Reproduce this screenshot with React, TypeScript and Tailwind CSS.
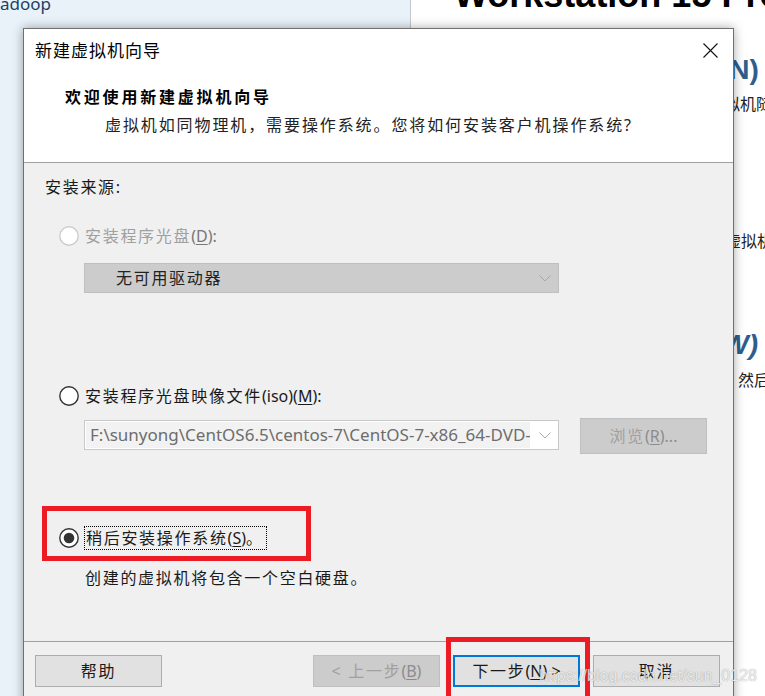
import React from "react";

function Radio({ checked, disabled }: { checked?: boolean; disabled?: boolean }) {
  return (
    <svg width="20" height="20" viewBox="0 0 20 20" className="shrink-0">
      <circle cx="10" cy="10" r="9.2" fill="white" stroke={disabled ? "#cccccc" : "#333333"} strokeWidth="1.4" />
      {checked && <circle cx="10" cy="10" r="5.3" fill="#333333" />}
    </svg>
  );
}

function Chevron() {
  return (
    <svg width="12" height="7" viewBox="0 0 12 7" className="shrink-0">
      <path d="M0.5 0.5 L6 6 L11.5 0.5" fill="none" stroke="#a8a8a8" strokeWidth="1" />
    </svg>
  );
}

export default function App() {
  return (
    <div className="relative w-[765px] h-[696px] overflow-hidden bg-white flex font-['Noto_Sans','Noto_Sans_CJK_SC',sans-serif]">
      {/* left pane of background app */}
      <div className="w-[411px] h-full shrink-0 bg-[#e9f1f9] border-r border-[#c4c8cc]">
        <div className="-mt-[5px] text-[17px] leading-none text-[#1d3f63]">adoop</div>
      </div>

      {/* right pane of background app */}
      <div className="flex-1 h-full overflow-hidden bg-white flex flex-col whitespace-nowrap">
        <div className="-mt-[23px] h-[36px] pl-[43px] text-[36px] leading-[36px] font-bold text-black font-['Liberation_Sans',sans-serif]">
          Workstation 15 Pro
        </div>
        <div className="mt-[43px] h-[28px] pl-[309px] text-[28px] leading-[28px] font-bold text-[#2e5e8e] font-['Liberation_Sans',sans-serif]">
          (N)
        </div>
        <div className="mt-[8px] h-[24px] pl-[297px] text-[16px] leading-[24px] text-[#222]">虚拟机随时</div>
        <div className="mt-[113px] h-[24px] pl-[314px] text-[16px] leading-[24px] text-[#222]">虚拟机</div>
        <div className="mt-[78px] h-[28px] pl-[302px] text-[28px] leading-[28px] font-bold italic text-[#2e5e8e] font-['Liberation_Sans',sans-serif]">
          (W)
        </div>
        <div className="mt-[9px] h-[24px] pl-[327px] text-[16px] leading-[24px] text-[#222]">然后</div>
      </div>

      {/* dialog window */}
      <div className="absolute left-[23px] top-[28px] w-[711px] h-[700px] border border-[#707070] bg-[#f0f0f0] shadow-[0_0_10px_rgba(0,0,0,0.35)] flex flex-col">
        <div className="bg-white border-b border-[#a0a0a0] flex flex-col">
          {/* title bar */}
          <div className="h-[42px] flex items-center justify-between pl-[11px] pr-[15px]">
            <span className="text-[17px] tracking-[1px] text-black leading-none">新建虚拟机向导</span>
            <svg width="15" height="15" viewBox="0 0 15 15">
              <path d="M0.5 0.5 L14.5 14.5 M14.5 0.5 L0.5 14.5" stroke="#111" strokeWidth="1.1" fill="none" />
            </svg>
          </div>
          {/* header */}
          <div className="h-[91px] flex flex-col">
            <div className="mt-[14px] pl-[41px] h-[24px] leading-[24px] text-[16px] font-bold tracking-[2.8px] text-black">
              欢迎使用新建虚拟机向导
            </div>
            <div className="mt-[4px] pl-[81px] h-[24px] leading-[24px] text-[16px] tracking-[1.9px] text-[#222]">
              虚拟机如同物理机，需要操作系统。您将如何安装客户机操作系统?
            </div>
          </div>
        </div>

        {/* body */}
        <div className="h-[478px] shrink-0 flex flex-col text-[16px] tracking-[1.7px] text-[#1a1a1a]">
          <div className="mt-[12px] pl-[21px] h-[24px] leading-[24px]">安装来源:</div>

          <div className="mt-[25px] pl-[35px] h-[24px] flex items-center gap-[6px]">
            <Radio disabled />
            <span className="leading-[24px] text-[#a0a0a0]">
              安装程序光盘<span className="tracking-normal text-[#777]">(<span className="underline underline-offset-2">D</span>):</span>
            </span>
          </div>

          <div className="mt-[15px] ml-[60px] w-[475px] h-[30px] bg-[#cccccc] border border-[#bfbfbf] flex items-center justify-between pl-[31px] pr-[7px]">
            <span className="leading-none text-[#222]">无可用驱动器</span>
            <Chevron />
          </div>

          <div className="mt-[91px] pl-[35px] h-[24px] flex items-center gap-[6px]">
            <Radio />
            <span className="leading-[24px]">
              安装程序光盘映像文件<span className="tracking-normal">(iso)(<span className="underline underline-offset-2">M</span>):</span>
            </span>
          </div>

          <div className="mt-[10px] ml-[60px] h-[36px] flex items-start">
            <div className="mt-[2px] w-[475px] h-[30px] bg-white border border-[#c8c8c8] flex items-center pl-[1px] pr-[7px]">
              <div className="w-[444px] h-[26px] bg-[#f2f2f2] overflow-hidden whitespace-nowrap pl-[4px] leading-[26px] text-[17px] tracking-normal text-[#6d6d6d]">
                F:\sunyong\CentOS6.5\centos-7\CentOS-7-x86_64-DVD-1708.iso
              </div>
              <div className="ml-auto">
                <Chevron />
              </div>
            </div>
            <div className="ml-[21px] w-[127px] h-[36px] bg-[#cccccc] border border-[#bfbfbf] flex items-center justify-center text-[#a0a0a0]">
              浏览<span className="tracking-normal text-[#8c8c8c]">(<span className="underline underline-offset-2">R</span>)...</span>
            </div>
          </div>

          <div className="mt-[72px] pl-[35px] h-[24px] flex items-center gap-[5px]">
            <Radio checked />
            <span className="h-[24px] leading-[22px] border border-dotted border-black pl-[1px] pr-[2px]">
              稍后安装操作系统<span className="tracking-normal">(<span className="underline underline-offset-2">S</span>)</span>。
            </span>
          </div>

          <div className="mt-[16px] pl-[61px] h-[24px] leading-[24px]">创建的虚拟机将包含一个空白硬盘。</div>
        </div>

        {/* footer */}
        <div className="border-t border-[#a0a0a0] pt-[13px] pl-[11px] flex text-[16px] tracking-[1.7px]">
          <div className="w-[127px] h-[32px] bg-[#e1e1e1] border border-[#adadad] flex items-center justify-center text-[#1a1a1a]">
            帮助
          </div>
          <div className="ml-[151px] w-[127px] h-[32px] bg-[#cccccc] border border-[#bfbfbf] flex items-center justify-center text-[#a0a0a0]">
            &lt; 上一步<span className="tracking-normal text-[#8c8c8c]">(<span className="underline underline-offset-2">B</span>)</span>
          </div>
          <div className="ml-[13px] w-[127px] h-[32px] bg-[#e1e1e1] border-2 border-[#0078d7] flex items-center justify-center text-[#1a1a1a]">
            下一步<span className="tracking-normal">(<span className="underline underline-offset-2">N</span>) &gt;</span>
          </div>
          <div className="ml-[13px] w-[127px] h-[32px] bg-[#e1e1e1] border border-[#adadad] flex items-center justify-center text-[#1a1a1a]">
            取消
          </div>
        </div>
      </div>

      {/* red annotation boxes */}
      <div className="absolute left-[42px] top-[506px] w-[269px] h-[55px] border-[5px] border-[#ed1c24]" />
      <div className="absolute left-[446px] top-[637px] w-[144px] h-[70px] border-[5px] border-[#ed1c24]" />

      {/* watermark */}
      <div className="absolute left-[539px] top-[665px] text-[16px] leading-[22px] whitespace-nowrap text-white/80 font-['Liberation_Sans',sans-serif] [text-shadow:0_0_1px_rgba(0,0,0,0.45)]">
        https://blog.csdn.net/sun_0128
      </div>
    </div>
  );
}
